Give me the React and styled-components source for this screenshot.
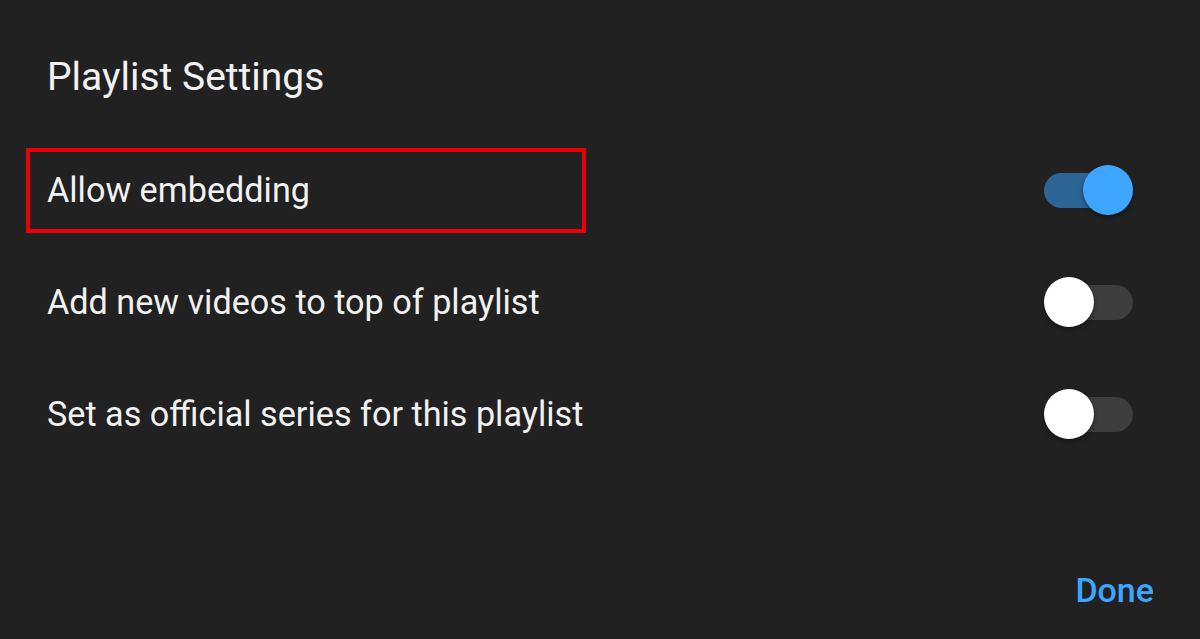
import React, { useState } from 'react';
import styled, { createGlobalStyle } from 'styled-components';

const GlobalStyle = createGlobalStyle`
  html, body {
    margin: 0;
    padding: 0;
    background: #212121;
  }
  * {
    box-sizing: border-box;
  }
`;

const Page = styled.div`
  display: flex;
  flex-direction: column;
  min-height: 100vh;
  padding: 56px 46px 31px 47px;
  background: #212121;
  color: #f1f1f1;
  font-family: Roboto, 'Noto Sans', sans-serif;
`;

const Title = styled.h1`
  margin: 0 0 36px;
  font-size: 39px;
  font-weight: 400;
  line-height: 42px;
  color: #f1f1f1;
`;

const List = styled.div`
  display: flex;
  flex-direction: column;
  padding-right: 21px;
`;

const Row = styled.div`
  display: flex;
  align-items: center;
  justify-content: space-between;
  height: 112px;
`;

const Label = styled.div`
  display: flex;
  align-items: center;
  font-size: 34.2px;
  line-height: 40px;
  color: #f1f1f1;

  ${({ highlighted }) =>
    highlighted &&
    `
    width: 560px;
    height: 85px;
    margin-left: -21px;
    padding-left: 17px;
    border: 4px solid #e8000b;
  `}
`;

const Track = styled.button`
  position: relative;
  width: 89px;
  height: 35px;
  padding: 0;
  border: none;
  border-radius: 18px;
  cursor: pointer;
  background: ${({ on }) => (on ? '#2d6496' : '#3d3d3d')};
`;

const Thumb = styled.span`
  position: absolute;
  top: 50%;
  left: ${({ on }) => (on ? '39px' : '0')};
  width: 50px;
  height: 50px;
  margin-top: -25px;
  border-radius: 50%;
  background: ${({ on }) => (on ? '#3ea6ff' : '#ffffff')};
  box-shadow: 0 2px 4px rgba(0, 0, 0, 0.45);
  transition: left 0.15s ease;
`;

const Footer = styled.div`
  display: flex;
  justify-content: flex-end;
  margin-top: auto;
`;

const DoneButton = styled.button`
  padding: 0;
  border: none;
  background: none;
  font-family: Roboto, 'Noto Sans', sans-serif;
  font-size: 34px;
  font-weight: 500;
  line-height: 36px;
  color: #3ea6ff;
  cursor: pointer;
`;

const Toggle = ({ on, onChange }) => (
  <Track on={on ? 1 : 0} onClick={onChange} aria-pressed={on}>
    <Thumb on={on ? 1 : 0} />
  </Track>
);

const settings = [
  { id: 'embed', label: 'Allow embedding', highlighted: true },
  { id: 'top', label: 'Add new videos to top of playlist' },
  { id: 'series', label: 'Set as official series for this playlist' },
];

const App = () => {
  const [values, setValues] = useState({ embed: true, top: false, series: false });

  const flip = (id) => setValues((v) => ({ ...v, [id]: !v[id] }));

  return (
    <>
      <GlobalStyle />
      <Page>
        <Title>Playlist Settings</Title>
        <List>
          {settings.map((s) => (
            <Row key={s.id}>
              <Label highlighted={s.highlighted}>{s.label}</Label>
              <Toggle on={values[s.id]} onChange={() => flip(s.id)} />
            </Row>
          ))}
        </List>
        <Footer>
          <DoneButton>Done</DoneButton>
        </Footer>
      </Page>
    </>
  );
};

export default App;
